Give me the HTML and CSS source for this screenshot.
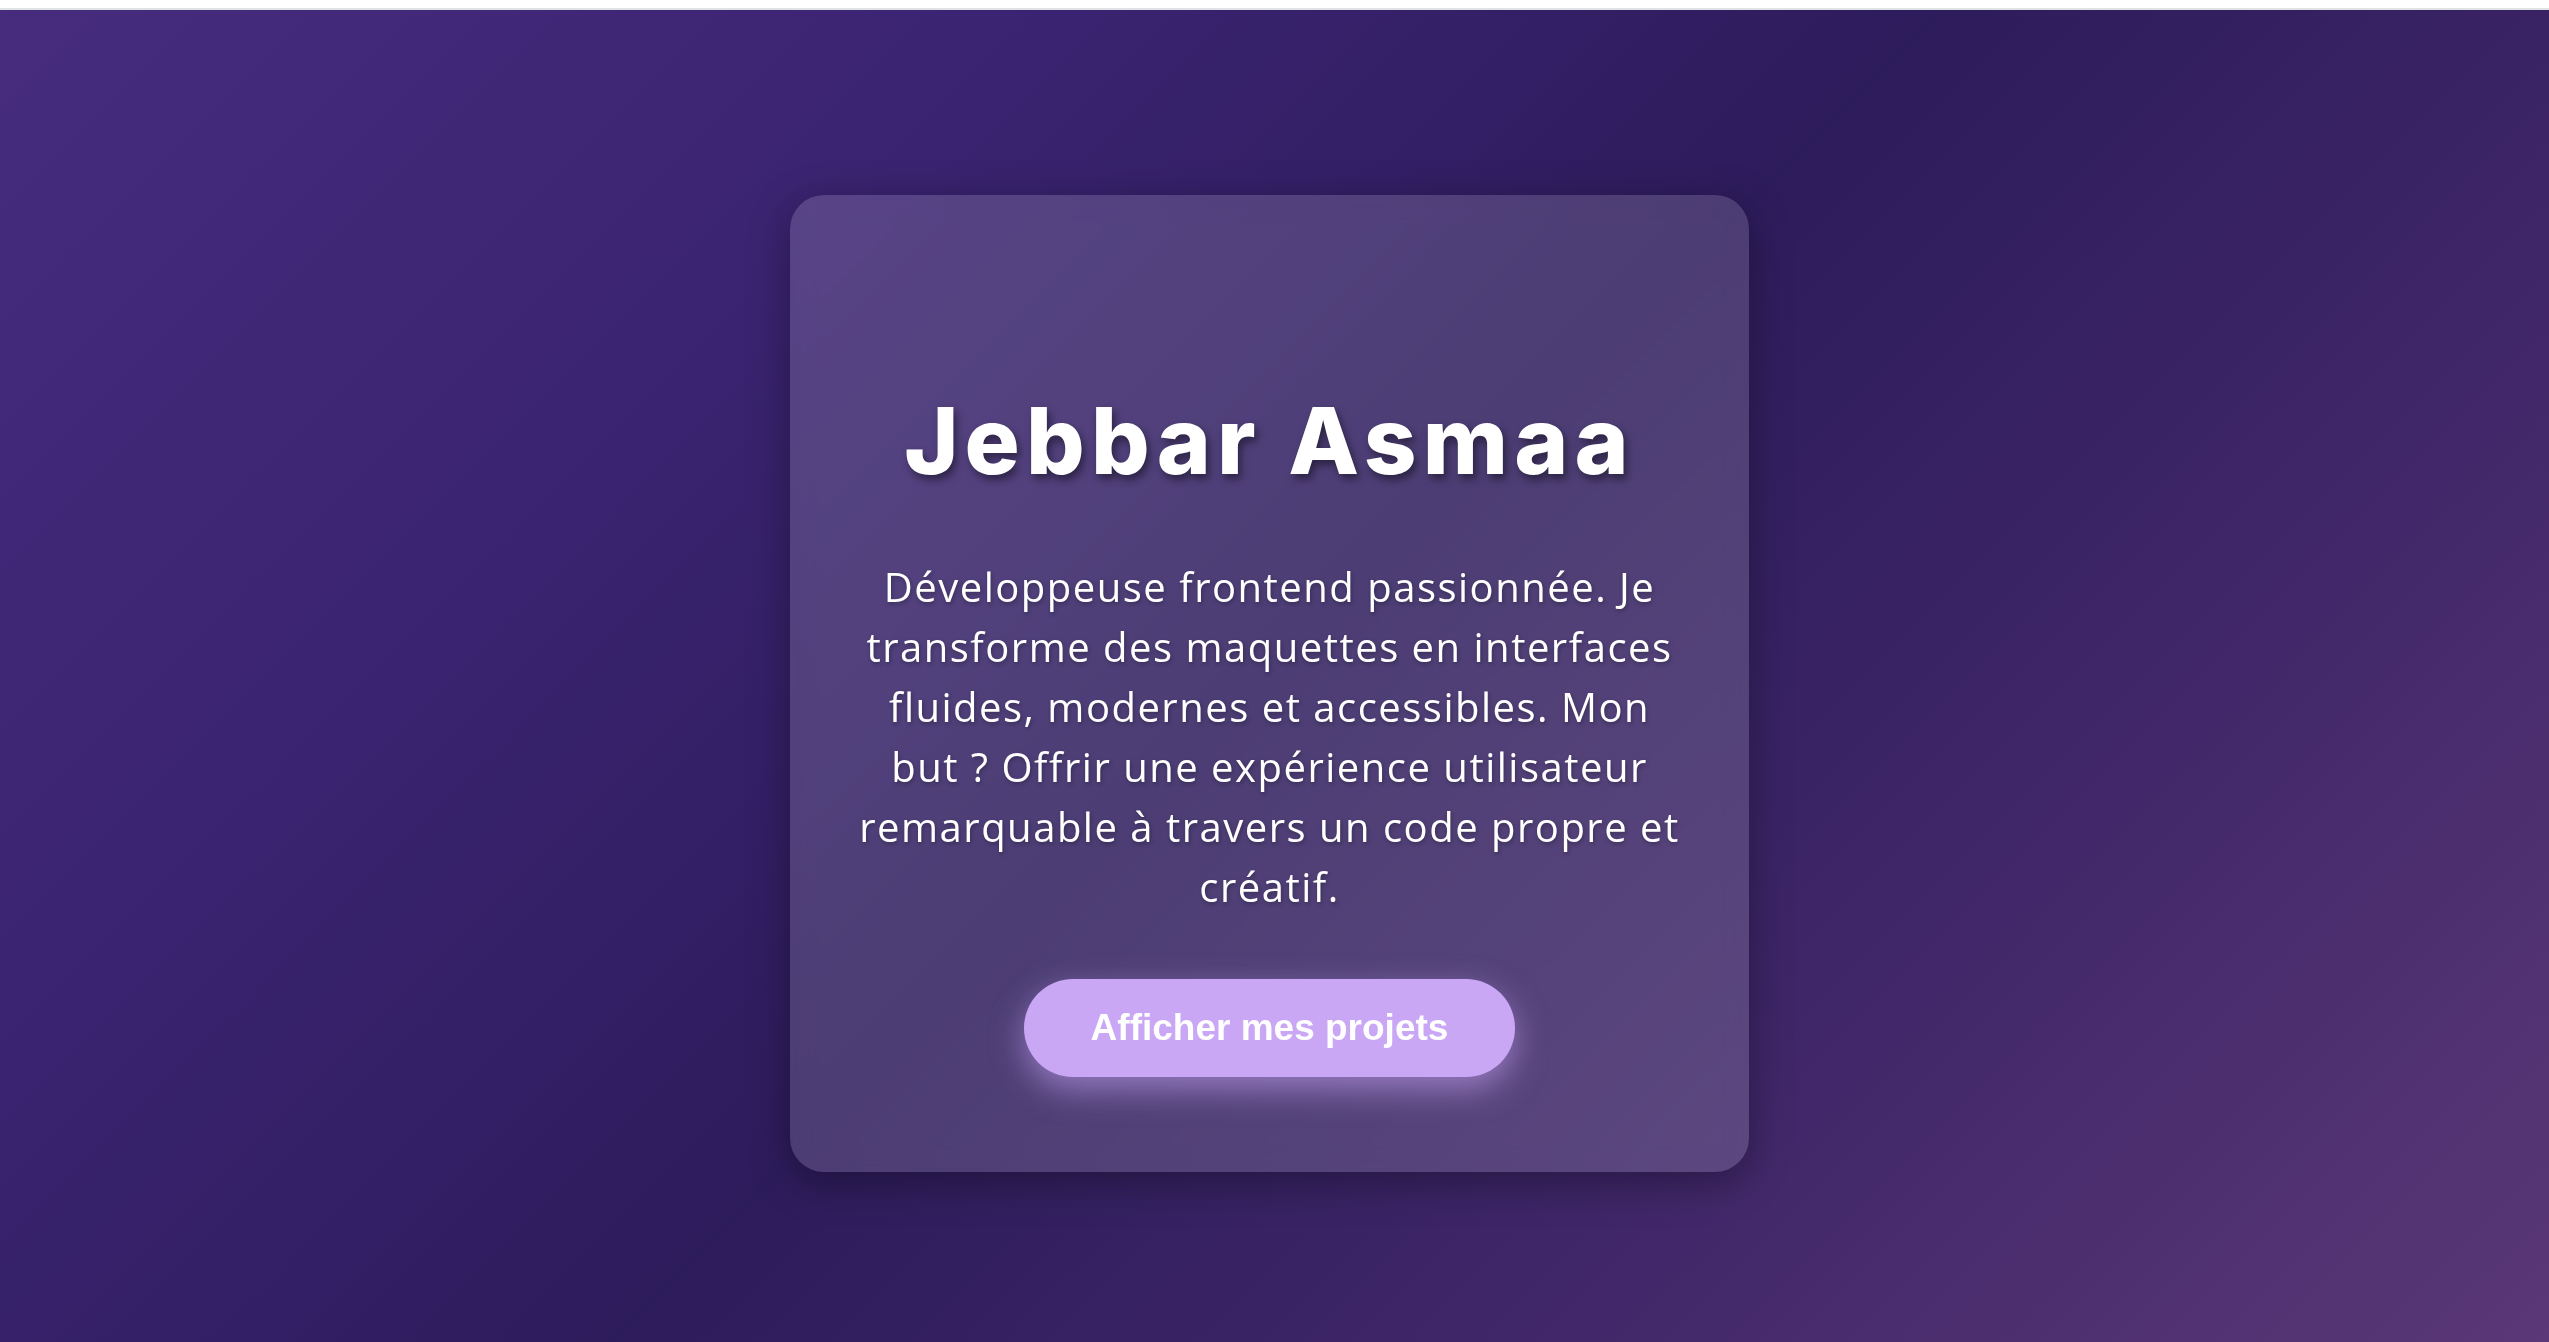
FILE: index.html
```html
<!DOCTYPE html>
<html lang="fr">
<head>
<meta charset="utf-8">
<title>Jebbar Asmaa</title>
<link rel="stylesheet" href="styles.css">
</head>
<body>
<div class="topbar"></div>
<main class="hero">
  <section class="card">
    <h1 class="name">Jebbar Asmaa</h1>
    <p class="intro">Développeuse frontend passionnée. Je transforme des maquettes en interfaces fluides, modernes et accessibles. Mon but ? Offrir une expérience utilisateur remarquable à travers un code propre et créatif.</p>
    <a class="cta" href="#projets">Afficher mes projets</a>
  </section>
</main>
</body>
</html>
```
FILE: styles.css
```css
html, body {
  margin: 0;
  padding: 0;
}
body {
  font-family: "Inter", "Noto Sans", sans-serif;
  background: #ffffff;
  overflow: hidden;
}
.topbar {
  height: 8px;
  background: #ffffff;
  border-bottom: 2px solid #dfe3e6;
}
.hero {
  box-sizing: border-box;
  min-height: 100vh;
  display: flex;
  align-items: flex-start;
  justify-content: center;
  padding: 185px 10px 0 0;
  background: linear-gradient(135deg, #472c7e 0%, #3a2370 28%, #2d1c5c 50%, #3f2668 72%, #5b3877 100%);
}
.card {
  box-sizing: border-box;
  width: 959px;
  height: 977px;
  padding: 191px 66px 0;
  border-radius: 34px;
  background: rgba(255, 255, 255, 0.15);
  backdrop-filter: blur(12px);
  box-shadow: 0 10px 40px rgba(0, 0, 0, 0.35);
  display: flex;
  flex-direction: column;
  align-items: center;
  text-align: center;
  color: #ffffff;
}
.name {
  margin: 0;
  font-family: "Inter", sans-serif;
  font-weight: 800;
  font-size: 92px;
  line-height: 1.2;
  letter-spacing: 6.2px;
  text-shadow: 3px 5px 8px rgba(0, 0, 0, 0.45);
}
.intro {
  margin: 61px 0 0;
  font-family: "Open Sans", sans-serif;
  font-size: 40px;
  line-height: 60px;
  letter-spacing: 1.5px;
  font-weight: 400;
  text-shadow: 1px 2px 4px rgba(0, 0, 0, 0.3);
}
.cta {
  margin-top: 62px;
  display: inline-block;
  padding: 26px 67px;
  border-radius: 60px;
  background: #c9a7f5;
  color: #ffffff;
  text-decoration: none;
  font-family: "Liberation Sans", Arial, sans-serif;
  font-weight: 700;
  font-size: 37px;
  line-height: 46px;
  box-shadow: 0 12px 32px rgba(205, 170, 250, 0.55);
}
```
